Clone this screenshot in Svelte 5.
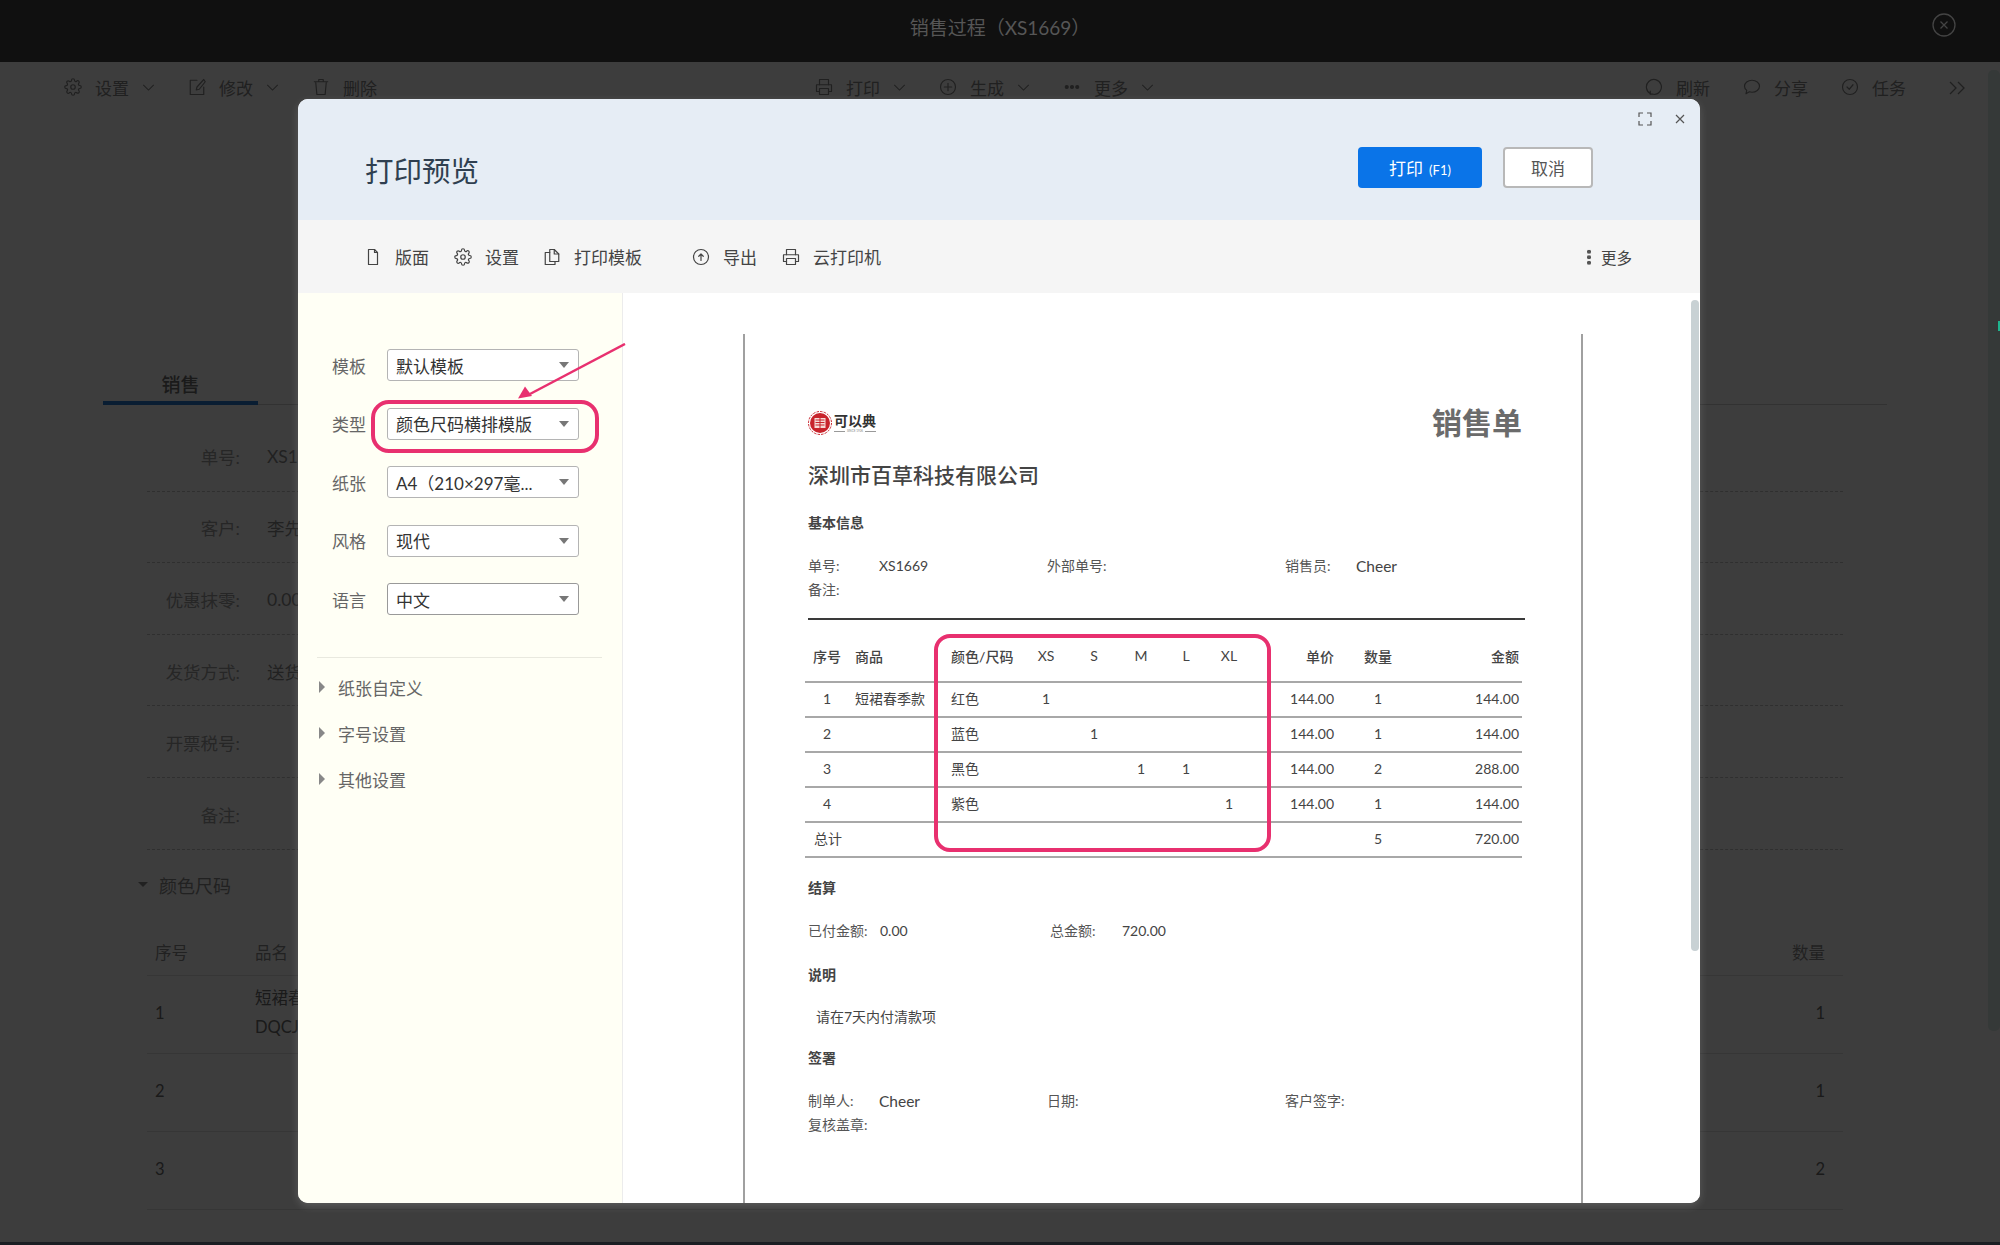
<script>
	const pageActions = [
		[
			{ icon: "gear", label: "设置", menu: true },
			{ icon: "edit", label: "修改", menu: true },
			{ icon: "trash", label: "删除" }
		],
		[
			{ icon: "printer", label: "打印", menu: true },
			{ icon: "plus", label: "生成", menu: true },
			{ icon: "dots", label: "更多", menu: true }
		],
		[
			{ icon: "refresh", label: "刷新" },
			{ icon: "comment", label: "分享" },
			{ icon: "check", label: "任务" }
		]
	];

	const fields = [
		["单号:", "XS1669"],
		["客户:", "李先生"],
		["优惠抹零:", "0.00"],
		["发货方式:", "送货上门"],
		["开票税号:", ""],
		["备注:", ""]
	];

	const skuRows = [
		{ no: 1, name: "短裙春季款", code: "DQCJ001", qty: 1 },
		{ no: 2, qty: 1 },
		{ no: 3, qty: 2 }
	];

	const previewTools = [
		{ icon: "file", label: "版面", width: 90 },
		{ icon: "gear", label: "设置", width: 89 },
		{ icon: "copy", label: "打印模板", width: 149 },
		{ icon: "upload", label: "导出", width: 90 },
		{ icon: "printer", label: "云打印机", width: 100 }
	];

	const selects = [
		["模板", "默认模板"],
		["类型", "颜色尺码横排模版"],
		["纸张", "A4（210×297毫..."],
		["风格", "现代"],
		["语言", "中文"]
	];

	const sizes = ["XS", "S", "M", "L", "XL"];

	const lines = [
		{ no: 1, name: "短裙春季款", color: "红色", cells: [1, "", "", "", ""], price: "144.00", qty: 1, amount: "144.00" },
		{ no: 2, name: "", color: "蓝色", cells: ["", 1, "", "", ""], price: "144.00", qty: 1, amount: "144.00" },
		{ no: 3, name: "", color: "黑色", cells: ["", "", 1, 1, ""], price: "144.00", qty: 2, amount: "288.00" },
		{ no: 4, name: "", color: "紫色", cells: ["", "", "", "", 1], price: "144.00", qty: 1, amount: "144.00" }
	];
</script>

{#snippet icon(name)}
	<svg class="icon" viewBox="0 0 24 24" fill="none" stroke="currentColor" stroke-width="1.6" stroke-linecap="round" stroke-linejoin="round">
		{#if name === "gear"}
			<circle cx="12" cy="12" r="3" />
			<path d="M19.4 15a1.65 1.65 0 0 0 .33 1.82l.06.06a2 2 0 0 1 0 2.83 2 2 0 0 1-2.83 0l-.06-.06a1.65 1.65 0 0 0-1.82-.33 1.65 1.65 0 0 0-1 1.51V21a2 2 0 0 1-2 2 2 2 0 0 1-2-2v-.09A1.65 1.65 0 0 0 9 19.4a1.65 1.65 0 0 0-1.82.33l-.06.06a2 2 0 0 1-2.83 0 2 2 0 0 1 0-2.83l.06-.06a1.65 1.65 0 0 0 .33-1.82 1.65 1.65 0 0 0-1.51-1H3a2 2 0 0 1-2-2 2 2 0 0 1 2-2h.09A1.65 1.65 0 0 0 4.6 9a1.65 1.65 0 0 0-.33-1.82l-.06-.06a2 2 0 0 1 0-2.83 2 2 0 0 1 2.83 0l.06.06a1.65 1.65 0 0 0 1.82.33H9a1.65 1.65 0 0 0 1-1.51V3a2 2 0 0 1 2-2 2 2 0 0 1 2 2v.09a1.65 1.65 0 0 0 1 1.51 1.65 1.65 0 0 0 1.82-.33l.06-.06a2 2 0 0 1 2.83 0 2 2 0 0 1 0 2.83l-.06.06a1.65 1.65 0 0 0-.33 1.82V9a1.65 1.65 0 0 0 1.51 1H21a2 2 0 0 1 2 2 2 2 0 0 1-2 2h-.09a1.65 1.65 0 0 0-1.51 1z" />
		{:else if name === "edit"}
			<path d="M12 3H3v19h18v-10" />
			<path d="M21 2l-9 10-1 4 4-1 8-10z" />
		{:else if name === "trash"}
			<path d="M5 6l1.5 16h11L19 6" />
			<path d="M3 5h18M9 5V2h6v3" />
		{:else if name === "printer"}
			<path d="M6 9V2h12v7" />
			<path d="M6 18H2V9h20v9h-4" />
			<path d="M6 14h12v8H6z" />
		{:else if name === "plus"}
			<circle cx="12" cy="12" r="10" />
			<path d="M12 7v10M7 12h10" />
		{:else if name === "dots"}
			<circle cx="5" cy="12" r="2" fill="currentColor" />
			<circle cx="12" cy="12" r="2" fill="currentColor" />
			<circle cx="19" cy="12" r="2" fill="currentColor" />
		{:else if name === "refresh"}
			<path d="M7.500 21A10 10 0 1 1 12 22" />
			<path d="M7 17.500v4h4" />
		{:else if name === "comment"}
			<path d="M12 3c5.500 0 10 3.500 10 8s-4.500 8-10 8c-1.500 0-2.500-.2-3.500-.6L4 21l1-4.500C3 15 2 13 2 11c0-4.500 4.500-8 10-8z" />
		{:else if name === "check"}
			<circle cx="12" cy="12" r="10" />
			<path d="M8 12l3 3 5-6" />
		{:else if name === "file"}
			<path d="M14 2H6v20h12V6z" />
			<path d="M14 2v4h4" />
		{:else if name === "copy"}
			<path d="M9 6H3v16h13v-4" />
			<path d="M15 2H9v16h12V8z" />
			<path d="M15 2v6h6" />
		{:else if name === "upload"}
			<circle cx="12" cy="12" r="10" />
			<path d="M12 16.500V8M9 11l3-3 3 3" />
		{/if}
	</svg>
{/snippet}

<div class="page">
	<header class="topbar">
		<h1>销售过程（XS1669）</h1>
		<span class="round-close">
			<svg viewBox="0 0 24 24" fill="none" stroke="currentColor" stroke-width="1.3">
				<circle cx="12" cy="12" r="11" />
				<path d="M8.5 8.5l7 7M15.5 8.5l-7 7" />
			</svg>
		</span>
	</header>

	<div class="workspace">
		<nav class="actions">
			{#each pageActions as group}
				<div class="action-group">
					{#each group as action}
						<span class="action">
							{@render icon(action.icon)}
							<span>{action.label}</span>
							{#if action.menu}
								<svg class="chevron" viewBox="0 0 14 8" fill="none" stroke="currentColor" stroke-width="1.2"><path d="M1 1l6 6 6-6" /></svg>
							{/if}
						</span>
					{/each}
				</div>
			{/each}
			<svg class="collapse" viewBox="0 0 16 14" fill="none" stroke="currentColor" stroke-width="1.3"><path d="M1 1l6 6-6 6M9 1l6 6-6 6" /></svg>
		</nav>

		<main class="content">
			<div class="tabs"><span class="tab">销售</span></div>

			<div class="form">
				{#each fields as [label, value]}
					<div class="form-row">
						<span class="form-label">{label}</span>
						<span class="form-value">{value}</span>
					</div>
				{/each}
			</div>

			<h2 class="section"><i class="caret-down"></i>颜色尺码</h2>

			<table class="sku">
				<thead>
					<tr><th>序号</th><th>品名</th><th class="qty">数量</th></tr>
				</thead>
				<tbody>
					{#each skuRows as row}
						<tr>
							<td>{row.no}</td>
							<td class="sku-name">
								{#if row.name}{row.name}<br>{row.code}{/if}
							</td>
							<td class="qty">{row.qty}</td>
						</tr>
					{/each}
				</tbody>
			</table>
		</main>

		<div class="page-scrollbar"></div>
		<div class="scrim"></div>
		<div class="edge-mark"></div>
	</div>

	<section class="modal">
		<header class="modal-head">
			<h2>打印预览</h2>
			<div class="head-buttons">
				<button class="btn-print" type="button">打印<small>(F1)</small></button>
				<button class="btn-cancel" type="button">取消</button>
			</div>
			<div class="window-icons">
				<svg viewBox="0 0 14 14" fill="none" stroke="currentColor" stroke-width="1.2"><path d="M1 5V1h4M9 1h4v4M13 9v4H9M5 13H1V9" /></svg>
				<svg viewBox="0 0 10 10" fill="none" stroke="currentColor" stroke-width="1.2"><path d="M1 1l8 8M9 1l-8 8" /></svg>
			</div>
		</header>

		<div class="modal-tools">
			<div class="tool-list">
				{#each previewTools as tool}
					<span class="tool" style="width: {tool.width}px">
						{@render icon(tool.icon)}
						<span>{tool.label}</span>
					</span>
				{/each}
			</div>
			<span class="more"><i class="vdots"></i>更多</span>
		</div>

		<div class="modal-body">
			<aside class="sidebar">
				<div class="select-list">
					{#each selects as [label, value], i}
						<div class="select-row">
							<span class="select-label">{label}</span>
							<div class="select" class:select-strong={i === 4}>
								<span>{value}</span>
								<i class="select-caret"></i>
							</div>
						</div>
					{/each}
				</div>
				<hr>
				{#each ["纸张自定义", "字号设置", "其他设置"] as item}
					<div class="fold"><i class="caret-right"></i>{item}</div>
				{/each}
				<div class="mark-select"></div>
			</aside>

			<div class="preview">
				<div class="paper">
					<div class="doc-head">
						<div class="logo">
							<svg viewBox="0 0 24 24">
								<circle cx="12" cy="12" r="11.5" fill="none" stroke="#c8242c" stroke-width="1" stroke-dasharray="2.4 1.2" />
								<circle cx="12" cy="12" r="10" fill="#c8242c" />
								<rect x="6.5" y="7" width="11" height="10" fill="#f6dcd8" />
								<path d="M7.5 9h9M7.5 11.500h9M7.5 14h9M12 7v10" stroke="#c8242c" stroke-width="1" />
							</svg>
							<div class="logo-text">
								<b>可以典</b>
								<small>SINCE 1926</small>
							</div>
						</div>
						<h3>销售单</h3>
					</div>

					<h4 class="company">深圳市百草科技有限公司</h4>

					<h5 class="block-title mt-21">基本信息</h5>
					<div class="info-row mt-19">
						<span><em>单号:</em>XS1669</span>
						<span><em>外部单号:</em></span>
						<span><em>销售员:</em><b class="person">Cheer</b></span>
					</div>
					<div class="info-row">
						<span><em>备注:</em></span>
					</div>

					<div class="heavy-line"></div>

					<table class="lines">
						<colgroup>
							<col style="width: 44px"><col style="width: 96px"><col style="width: 77px">
							<col style="width: 48px"><col style="width: 48px"><col style="width: 46px"><col style="width: 44px"><col style="width: 42px">
							<col style="width: 90px"><col style="width: 76px"><col style="width: 106px">
						</colgroup>
						<thead>
							<tr>
								<th>序号</th>
								<th class="left">商品</th>
								<th class="left">颜色/尺码</th>
								{#each sizes as size}<th class="size">{size}</th>{/each}
								<th class="price">单价</th>
								<th>数量</th>
								<th class="amount">金额</th>
							</tr>
						</thead>
						<tbody>
							{#each lines as line}
								<tr>
									<td>{line.no}</td>
									<td class="left">{line.name}</td>
									<td class="left">{line.color}</td>
									{#each line.cells as cell}<td>{cell}</td>{/each}
									<td class="price">{line.price}</td>
									<td>{line.qty}</td>
									<td class="amount">{line.amount}</td>
								</tr>
							{/each}
							<tr>
								<td class="total-label">总计</td>
								<td colspan="8"></td>
								<td>5</td>
								<td class="amount">720.00</td>
							</tr>
						</tbody>
					</table>

					<h5 class="block-title mt-18">结算</h5>
					<div class="info-row settle mt-19">
						<span><em>已付金额:</em>0.00</span>
						<span><em>总金额:</em>720.00</span>
					</div>

					<h5 class="block-title mt-20">说明</h5>
					<p class="note">请在7天内付清款项</p>

					<h5 class="block-title mt-17">签署</h5>
					<div class="info-row mt-19">
						<span><em>制单人:</em><b class="person">Cheer</b></span>
						<span><em>日期:</em></span>
						<span><em>客户签字:</em></span>
					</div>
					<div class="info-row">
						<span><em>复核盖章:</em></span>
					</div>

					<div class="mark-table"></div>
				</div>
				<div class="preview-scrollbar"></div>
			</div>

			<svg class="arrow" viewBox="0 0 120 70" fill="none">
				<path d="M117 1L22 51" stroke="#e8306f" stroke-width="2.5" />
				<path d="M10 55.500l7-12 7 9.500z" fill="#e8306f" />
			</svg>
		</div>
	</section>
</div>

<style>
	:global(body) {
		background: #1b1e23;
		margin: 0;
	}

	.page {
		color: #7e7e7e;
		font-family: Lato, "Noto Sans CJK SC", sans-serif;
		height: 1242px;
		overflow: hidden;
		position: relative;
		width: 2000px;
	}

	.topbar {
		align-items: center;
		background: #101010;
		color: #565656;
		display: flex;
		height: 62px;
		justify-content: center;
		position: relative;
	}

	.topbar h1 {
		font-size: 19px;
		font-weight: 400;
		margin: 0 0 10px;
	}

	.round-close {
		color: #444;
		height: 24px;
		position: absolute;
		right: 44px;
		top: 13px;
		width: 24px;
	}

	.workspace {
		background: #fff;
		height: 1180px;
		position: relative;
	}

	.scrim {
		background: rgba(0, 0, 0, 0.76);
		inset: 0;
		position: absolute;
	}

	.edge-mark {
		background: #1fb58f;
		height: 10px;
		position: absolute;
		right: 0;
		top: 259px;
		width: 2px;
	}

	.actions {
		align-items: center;
		color: #868686;
		display: grid;
		font-size: 17px;
		grid-template-columns: 751px 830px 1fr;
		height: 51px;
		padding-left: 64px;
		position: relative;
	}

	.action-group {
		display: flex;
		gap: 33px;
		padding-bottom: 1px;
	}

	.action {
		align-items: center;
		display: flex;
		gap: 13px;
	}

	.icon {
		display: block;
		flex: none;
		height: 18px;
		width: 18px;
	}

	.chevron {
		height: 7px;
		width: 13px;
	}

	.collapse {
		height: 14px;
		position: absolute;
		right: 35px;
		top: 19px;
		width: 16px;
	}

	.content {
		padding: 0 113px 0 103px;
	}

	.tabs {
		align-items: flex-end;
		border-bottom: 1px solid #d0d0d0;
		box-sizing: border-box;
		display: flex;
		height: 292px;
	}

	.tab {
		border-bottom: 4px solid #2878d0;
		color: #6f6f6f;
		font-size: 19px;
		font-weight: 500;
		line-height: 32px;
		margin-bottom: -1px;
		text-align: center;
		width: 155px;
	}

	.form {
		margin-left: 44px;
		margin-top: 15px;
		width: 1696px;
	}

	.form-row {
		align-items: center;
		border-bottom: 1px dashed #c4c4c4;
		box-sizing: border-box;
		display: flex;
		font-size: 17.5px;
		gap: 27px;
		height: 71.6px;
		padding-top: 2px;
	}

	.form-label {
		color: #a0a0a0;
		flex: none;
		text-align: right;
		width: 93px;
	}

	.form-value {
		color: #8c8c8c;
	}

	.section {
		align-items: center;
		color: #8c8c8c;
		display: flex;
		font-size: 18px;
		font-weight: 400;
		gap: 11px;
		height: 24px;
		margin: 23px 0 0 35px;
	}

	.caret-down {
		border-left: 5px solid transparent;
		border-right: 5px solid transparent;
		border-top: 5px solid #8c8c8c;
		height: 0;
		width: 0;
	}

	.sku {
		border-collapse: collapse;
		font-size: 16.5px;
		margin: 32px 0 0 44px;
		table-layout: fixed;
		width: 1696px;
	}

	.sku th {
		border-bottom: 1px solid #e0e0e0;
		color: #8c8c8c;
		font-weight: 400;
		height: 46px;
		padding: 0 0 0 8px;
		text-align: left;
	}

	.sku th:first-child {
		width: 92px;
	}

	.sku td {
		border-bottom: 1px solid #e0e0e0;
		color: #6c6c6c;
		height: 75px;
		padding: 0 0 2px 8px;
	}

	.sku .qty {
		padding-right: 18px;
		text-align: right;
		width: 100px;
	}

	.sku-name {
		line-height: 29px;
	}

	.page-scrollbar {
		background: #ddede9;
		border-radius: 5px;
		height: 961px;
		position: absolute;
		right: 0;
		top: 8px;
		width: 12px;
	}

	.modal {
		background: #fff;
		border-radius: 10px;
		box-shadow: 0 3px 8px rgba(255, 255, 255, 0.16);
		display: flex;
		flex-direction: column;
		height: 1104px;
		left: 298px;
		overflow: hidden;
		position: absolute;
		top: 99px;
		width: 1402px;
	}

	.modal-head {
		align-items: center;
		background: #e6edf5;
		box-sizing: border-box;
		display: flex;
		flex: none;
		height: 121px;
		justify-content: space-between;
		padding: 23px 107px 0 67px;
		position: relative;
	}

	.modal-head h2 {
		color: #2f3f50;
		font-size: 28.5px;
		font-weight: 400;
		margin: 0 0 3px;
	}

	.head-buttons {
		display: flex;
		gap: 21px;
		margin-bottom: 8px;
	}

	.head-buttons button {
		border-radius: 4px;
		box-sizing: border-box;
		cursor: pointer;
		font-family: inherit;
		font-size: 17px;
		height: 41px;
		padding: 0;
	}

	.btn-print {
		background: #0a74e8;
		border: 0;
		color: #fff;
		width: 124px;
	}

	.btn-print small {
		font-size: 13px;
		margin-left: 6px;
	}

	.btn-cancel {
		background: #fff;
		border: 2px solid #b8b8b8;
		color: #555;
		width: 90px;
	}

	.window-icons {
		align-items: center;
		color: #555;
		display: flex;
		gap: 23px;
		position: absolute;
		right: 15px;
		top: 13px;
	}

	.window-icons svg:first-child {
		height: 14px;
		width: 14px;
	}

	.window-icons svg:last-child {
		height: 10px;
		width: 10px;
	}

	.modal-tools {
		align-items: center;
		background: #f5f5f5;
		box-sizing: border-box;
		color: #444;
		display: flex;
		flex: none;
		font-size: 17px;
		height: 73px;
		justify-content: space-between;
		padding: 0 68px 0 66px;
	}

	.tool-list {
		display: flex;
	}

	.tool {
		align-items: center;
		display: flex;
		gap: 13px;
	}

	.more {
		align-items: center;
		display: flex;
		font-size: 15.5px;
		gap: 10px;
	}

	.vdots {
		background: radial-gradient(circle, #555 1.9px, transparent 2.2px) 0 0 / 4px 5.5px;
		height: 16px;
		width: 4px;
	}

	.modal-body {
		display: flex;
		flex: 1;
		min-height: 0;
		position: relative;
	}

	.sidebar {
		background: #fffff5;
		border-right: 1px solid #ececec;
		box-sizing: border-box;
		color: #555;
		flex: none;
		font-size: 17px;
		padding: 56px 0 0 19px;
		position: relative;
		width: 325px;
	}

	.select-list {
		display: flex;
		flex-direction: column;
		gap: 26.5px;
	}

	.select-row {
		align-items: center;
		display: flex;
		height: 32px;
		padding-left: 15px;
	}

	.select-label {
		color: #666;
		flex: none;
		width: 55px;
	}

	.select {
		align-items: center;
		background: #fff;
		border: 1px solid #b4b4b4;
		border-radius: 3px;
		box-sizing: border-box;
		color: #333;
		display: flex;
		height: 32px;
		justify-content: space-between;
		padding: 0 9px 0 8px;
		width: 192px;
	}

	.select span {
		white-space: nowrap;
	}

	.select-strong {
		border-color: #999;
	}

	.select-caret {
		border-left: 5px solid transparent;
		border-right: 5px solid transparent;
		border-top: 6px solid #777;
		flex: none;
		height: 0;
		width: 0;
	}

	.sidebar hr {
		border: 0;
		border-top: 1px solid #e9e9df;
		margin: 42px 0 6px;
		width: 285px;
	}

	.fold {
		align-items: center;
		color: #666;
		display: flex;
		gap: 13px;
		height: 46px;
		padding-left: 2px;
	}

	.caret-right {
		border-bottom: 6px solid transparent;
		border-left: 6px solid #888;
		border-top: 6px solid transparent;
		height: 0;
		width: 0;
	}

	.mark-select {
		border: 4px solid #e8306f;
		border-radius: 18px;
		box-sizing: border-box;
		height: 53px;
		left: 73px;
		position: absolute;
		top: 107px;
		width: 228px;
	}

	.preview {
		background: #fff;
		flex: 1;
		overflow: hidden;
		position: relative;
	}

	.paper {
		border-left: 2px solid #a0a0a0;
		border-right: 2px solid #a0a0a0;
		box-sizing: border-box;
		color: #444;
		font-size: 14px;
		height: 900px;
		margin: 41px 0 0 120px;
		padding: 71px 56px 0 63px;
		position: relative;
		width: 840px;
	}

	.doc-head {
		align-items: center;
		display: flex;
		height: 36px;
		justify-content: space-between;
		padding-right: 3px;
	}

	.doc-head h3 {
		color: #6b6b6b;
		font-size: 30px;
		font-weight: 700;
		margin: 0 0 5px;
	}

	.logo {
		align-items: center;
		display: flex;
		gap: 2px;
	}

	.logo svg {
		height: 24px;
		width: 24px;
	}

	.logo-text {
		color: #333;
		display: flex;
		flex-direction: column;
		line-height: 1;
	}

	.logo-text b {
		font-size: 14px;
	}

	.logo-text small {
		align-items: center;
		color: #888;
		display: flex;
		font-size: 3px;
		gap: 2px;
		margin-top: 2px;
		white-space: nowrap;
	}

	.logo-text small::before,
	.logo-text small::after {
		background: #999;
		content: "";
		flex: 1;
		height: 1px;
	}

	.company {
		color: #444;
		font-size: 21px;
		font-weight: 500;
		line-height: 30px;
		margin: 19px 0 0;
	}

	.block-title {
		color: #444;
		font-size: 14px;
		font-weight: 700;
		line-height: 24px;
		margin: 0;
	}

	.mt-17 { margin-top: 17px; }
	.mt-18 { margin-top: 18px; }
	.mt-19 { margin-top: 19px; }
	.mt-20 { margin-top: 20px; }
	.mt-21 { margin-top: 21px; }

	.info-row {
		display: grid;
		grid-template-columns: 239px 238px 1fr;
		line-height: 24px;
	}

	.info-row span {
		display: flex;
	}

	.info-row em {
		color: #555;
		font-style: normal;
		width: 71px;
	}

	.person {
		font-size: 15.5px;
		font-weight: 400;
	}

	.settle {
		grid-template-columns: 242px 1fr;
	}

	.settle em {
		width: 72px;
	}

	.heavy-line {
		background: #3a3a3a;
		height: 2px;
		margin-top: 16px;
	}

	.lines {
		border-collapse: collapse;
		margin-left: -3px;
		table-layout: fixed;
		width: 717px;
	}

	.lines th {
		border-bottom: 2px solid #a8a8a8;
		box-sizing: border-box;
		color: #444;
		font-weight: 500;
		height: 62px;
		padding: 10px 0 0;
		text-align: center;
	}

	.lines .size {
		font-weight: 400;
	}

	.lines td {
		border-bottom: 2px solid #a8a8a8;
		box-sizing: border-box;
		height: 35px;
		padding: 0 0 3px;
		text-align: center;
	}

	.lines .left {
		padding-left: 6px;
		text-align: left;
		white-space: nowrap;
	}

	.lines .price {
		padding-right: 6px;
		text-align: right;
	}

	.lines .amount {
		padding-right: 3px;
		text-align: right;
	}

	.lines .total-label {
		padding-left: 9px;
		text-align: left;
	}

	.note {
		line-height: 24px;
		margin: 18px 0 0;
		padding-left: 8px;
	}

	.mark-table {
		border: 4px solid #e8306f;
		border-radius: 16px;
		box-sizing: border-box;
		height: 218px;
		left: 189px;
		position: absolute;
		top: 300px;
		width: 337px;
	}

	.preview-scrollbar {
		background: #c8d1d4;
		border-radius: 4px;
		height: 651px;
		position: absolute;
		right: 1px;
		top: 7px;
		width: 8px;
	}

	.arrow {
		height: 70px;
		left: 210px;
		position: absolute;
		top: 50px;
		width: 120px;
	}
</style>
